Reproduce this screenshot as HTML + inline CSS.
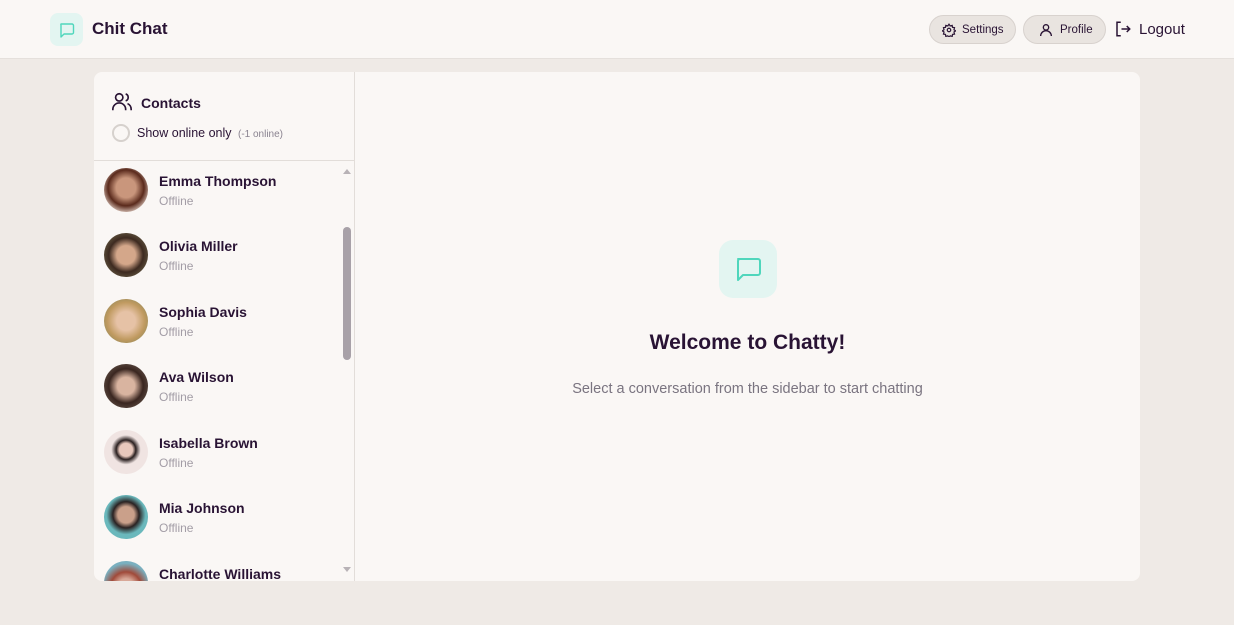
<!DOCTYPE html>
<html><head><meta charset="utf-8"><style>
*{box-sizing:border-box;margin:0;padding:0}
body{width:1234px;height:625px;overflow:hidden;background:#efeae6;font-family:"Liberation Sans","DejaVu Sans",sans-serif;color:#291334;position:relative}
.hdr{position:absolute;left:0;top:0;width:1234px;height:59px;background:#faf7f5;border-bottom:1px solid #e5e0dc}
.logo{position:absolute;left:50px;top:13px;width:33px;height:33px;border-radius:8px;background:#e3f5f1}
.brand{position:absolute;left:92px;top:19px;font-size:17px;font-weight:bold}
.btn{position:absolute;top:15px;height:29px;border-radius:15px;background:#e9e4e0;border:1px solid #d8d2ce;font-size:11.5px;display:flex;align-items:center;gap:6px;padding-left:12px}
.card{position:absolute;left:94px;top:72px;width:1046px;height:509px;background:#faf7f5;border-radius:8px;overflow:hidden}
.side{position:absolute;left:0;top:0;width:261px;height:509px;border-right:1px solid #e2ddd9}
.sh{height:89px;border-bottom:1px solid #e2ddd9;position:relative}
.row{position:absolute;left:10px;height:44px}
.av{position:absolute;left:0;top:0;width:44px;height:44px;border-radius:50%}
.nm{position:absolute;left:55px;top:5px;font-size:14px;font-weight:bold;white-space:nowrap;color:#291334}
.st{position:absolute;left:55px;top:26px;font-size:12px;color:#a39da6}
</style></head><body>
<div class="hdr">
<div class="logo"><svg width="33" height="33" viewBox="0 0 33 33"><path d="M11 11h11a1.5 1.5 0 0 1 1.5 1.5v7a1.5 1.5 0 0 1-1.5 1.5h-8l-3 3V12.5A1.5 1.5 0 0 1 11 11z" fill="none" stroke="#4fd6bc" stroke-width="1.4" stroke-linejoin="round"/></svg></div>
<div class="brand">Chit Chat</div>
<div class="btn" style="left:929px;width:87px"><svg width="14" height="14" viewBox="0 0 24 24" fill="none" stroke="#291334" stroke-width="2"><circle cx="12" cy="12" r="3"/><path d="M12 2l2 3 3.5-1 .5 3.5 3.5.5-1 3.5 3 2-3 2 1 3.5-3.5.5-.5 3.5-3.5-1-2 3-2-3-3.5 1-.5-3.5-3.5-.5 1-3.5-3-2 3-2-1-3.5 3.5-.5.5-3.5 3.5 1z"/></svg>Settings</div>
<div class="btn" style="left:1023px;width:83px;padding-left:14px"><svg width="16" height="16" viewBox="0 0 24 24" fill="none" stroke="#291334" stroke-width="2"><circle cx="12" cy="8" r="4"/><path d="M4 21a8 8 0 0 1 16 0"/></svg>Profile</div>
<div style="position:absolute;left:1114px;top:20px;display:flex;gap:7px;align-items:center;font-size:15px"><svg width="18" height="18" viewBox="0 0 24 24" fill="none" stroke="#291334" stroke-width="2"><path d="M9 3H4v18h5M10 12h11M17 8l4 4-4 4"/></svg>Logout</div>
</div>
<div class="card">
<div class="side">
<div class="sh">
<svg style="position:absolute;left:17px;top:19px" width="22" height="22" viewBox="0 0 24 24" fill="none" stroke="#291334" stroke-width="1.8"><circle cx="9" cy="7" r="4"/><path d="M2 21v-1a7 7 0 0 1 14 0v1M16 3.2a4 4 0 0 1 0 7.6M22 21v-1a7 7 0 0 0-4-6.3"/></svg>
<div style="position:absolute;left:47px;top:23px;font-size:14px;font-weight:bold">Contacts</div>
<div style="position:absolute;left:18px;top:52px;width:18px;height:18px;border-radius:50%;border:2px solid #d6d1cd"></div>
<div style="position:absolute;left:43px;top:54px;font-size:12.5px">Show online only <span style="font-size:10px;color:#8a8390;margin-left:3px">(-1 online)</span></div>
</div>
<div class="row" style="top:96px"><div class="av" style="background:radial-gradient(circle at 50% 45%,#c9967c 0 30%,#5a2a1c 55%,#e8d6cc 80%)"></div><div class="nm">Emma Thompson</div><div class="st">Offline</div></div>
<div class="row" style="top:161px"><div class="av" style="background:radial-gradient(circle at 50% 50%,#d4a78a 0 30%,#3d2a20 55%,#6a6048 85%)"></div><div class="nm">Olivia Miller</div><div class="st">Offline</div></div>
<div class="row" style="top:227px"><div class="av" style="background:radial-gradient(circle at 50% 50%,#e6c2a6 0 30%,#c09a60 60%,#88865a 90%)"></div><div class="nm">Sophia Davis</div><div class="st">Offline</div></div>
<div class="row" style="top:292px"><div class="av" style="background:radial-gradient(circle at 50% 50%,#d9b4a0 0 28%,#3a2620 55%,#6a5a50 90%)"></div><div class="nm">Ava Wilson</div><div class="st">Offline</div></div>
<div class="row" style="top:358px"><div class="av" style="background:radial-gradient(circle at 50% 45%,#e8c8bc 0 20%,#2a2020 30%,#f0e4e2 45%)"></div><div class="nm">Isabella Brown</div><div class="st">Offline</div></div>
<div class="row" style="top:423px"><div class="av" style="background:radial-gradient(circle at 50% 45%,#caa08a 0 25%,#2a2222 40%,#6ab8bc 60%)"></div><div class="nm">Mia Johnson</div><div class="st">Offline</div></div>
<div class="row" style="top:489px"><div class="av" style="background:radial-gradient(circle at 50% 60%,#d8a898 0 25%,#a04a3a 45%,#7ab0c0 70%)"></div><div class="nm">Charlotte Williams</div></div>
<div style="position:absolute;left:249px;top:155px;width:8px;height:133px;border-radius:4px;background:#a8a1a8"></div>
<div style="position:absolute;left:249px;top:97px;border:4px solid transparent;border-bottom:5px solid #b8b2b6;border-top:0"></div>
<div style="position:absolute;left:249px;top:495px;border:4px solid transparent;border-top:5px solid #b8b2b6;border-bottom:0"></div>
</div>
<div style="position:absolute;left:625px;top:168px;width:58px;height:58px;border-radius:14px;background:#e3f5f1"><svg width="58" height="58" viewBox="0 0 58 58"><path d="M19 19h20a2 2 0 0 1 2 2v12a2 2 0 0 1-2 2h-15l-5 5V21a2 2 0 0 1 2-2z" fill="none" stroke="#4fd6bc" stroke-width="2" stroke-linejoin="round"/></svg></div>
<div style="position:absolute;left:261px;width:785px;top:259px;text-align:center;font-size:21px;font-weight:bold">Welcome to Chatty!</div>
<div style="position:absolute;left:261px;width:785px;top:309px;text-align:center;font-size:14.5px;color:#7a7480">Select a conversation from the sidebar to start chatting</div>
</div>
</body></html>
